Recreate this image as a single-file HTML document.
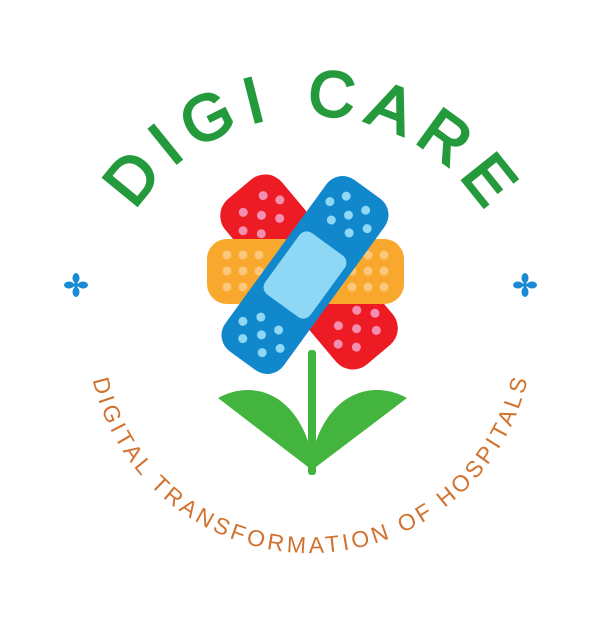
<!DOCTYPE html>
<html><head><meta charset="utf-8"><style>
html,body{margin:0;padding:0;background:#fff;}
svg{display:block;}
</style></head><body>
<svg width="616" height="621" viewBox="0 0 616 621" xmlns="http://www.w3.org/2000/svg">
<defs>
<path id="top" d="M 102,323 A 208 208 0 0 1 518,323"/>
<path id="bot" d="M 310,107 A 223 223 0 0 0 310,553 A 223 223 0 0 0 310,107"/>
</defs>
<text font-family="Liberation Sans, sans-serif" font-size="64" fill="#259a3c" stroke="#259a3c" stroke-width="2.5">
<textPath href="#top" startOffset="50%" text-anchor="middle" textLength="415" lengthAdjust="spacing">DIGI CARE</textPath></text>
<text font-family="Liberation Sans, sans-serif" font-size="23" fill="#d2722f">
<textPath href="#bot" startOffset="50%" text-anchor="middle" textLength="600" lengthAdjust="spacing">DIGITAL TRANSFORMATION OF HOSPITALS</textPath></text>

<g fill="#1a8ad4">
<g transform="translate(76,285)">
<ellipse cx="0" cy="-7" rx="3.5" ry="5"/><ellipse cx="0" cy="7" rx="3.5" ry="5"/>
<ellipse cx="-7" cy="0" rx="5" ry="3.5"/><ellipse cx="7" cy="0" rx="5" ry="3.5"/>
<rect x="-1.5" y="-8" width="3" height="16"/><rect x="-8" y="-1.5" width="16" height="3"/></g>
<g transform="translate(525,285)">
<ellipse cx="0" cy="-7" rx="3.5" ry="5"/><ellipse cx="0" cy="7" rx="3.5" ry="5"/>
<ellipse cx="-7" cy="0" rx="5" ry="3.5"/><ellipse cx="7" cy="0" rx="5" ry="3.5"/>
<rect x="-1.5" y="-8" width="3" height="16"/><rect x="-8" y="-1.5" width="16" height="3"/></g>
</g>

<g fill="#43b53f">
<rect x="308" y="350" width="8" height="125" rx="3"/>
<path d="M218,398 C255,378 298,395 312,455 L312,470 Z"/>
<path d="M407,398 C370,378 326,395 312,455 L312,470 Z"/>
</g>

<g transform="translate(309,272) rotate(50)">
<rect x="-108" y="-37" width="216" height="74" rx="22" fill="#ed1c24"/>
<g fill="#f48fb1">
<circle cx="-88" cy="-14" r="4.5"/><circle cx="-88" cy="12" r="4.5"/>
<circle cx="-74" cy="-24" r="4.5"/><circle cx="-74" cy="0" r="4.5"/><circle cx="-74" cy="24" r="4.5"/>
<circle cx="-60" cy="-12" r="4.5"/><circle cx="-60" cy="12" r="4.5"/>
<circle cx="88" cy="-14" r="4.5"/><circle cx="88" cy="12" r="4.5"/>
<circle cx="74" cy="-24" r="4.5"/><circle cx="74" cy="0" r="4.5"/><circle cx="74" cy="24" r="4.5"/>
<circle cx="60" cy="-12" r="4.5"/><circle cx="60" cy="12" r="4.5"/>
</g></g>

<rect x="207" y="239" width="197" height="65" rx="20" fill="#f7a82d"/>
<g fill="#fcc778">
<circle cx="227" cy="255" r="4.5"/><circle cx="243" cy="255" r="4.5"/><circle cx="259" cy="255" r="4.5"/>
<circle cx="227" cy="271" r="4.5"/><circle cx="243" cy="271" r="4.5"/><circle cx="259" cy="271" r="4.5"/>
<circle cx="227" cy="287" r="4.5"/><circle cx="243" cy="287" r="4.5"/><circle cx="259" cy="287" r="4.5"/>
<circle cx="352" cy="255" r="4.5"/><circle cx="368" cy="255" r="4.5"/><circle cx="384" cy="255" r="4.5"/>
<circle cx="352" cy="271" r="4.5"/><circle cx="368" cy="271" r="4.5"/><circle cx="384" cy="271" r="4.5"/>
<circle cx="352" cy="287" r="4.5"/><circle cx="368" cy="287" r="4.5"/><circle cx="384" cy="287" r="4.5"/>
</g>

<g transform="translate(305,275) rotate(-54)">
<rect x="-106" y="-36" width="212" height="72" rx="20" fill="#1188cc"/>
<rect x="-38" y="-28" width="76" height="56" rx="9" fill="#8ed8f5"/>
<g fill="#8ed8f5">
<circle cx="-88" cy="-13" r="4.5"/><circle cx="-88" cy="11" r="4.5"/>
<circle cx="-74" cy="-23" r="4.5"/><circle cx="-74" cy="0" r="4.5"/><circle cx="-74" cy="23" r="4.5"/>
<circle cx="-60" cy="-11" r="4.5"/><circle cx="-60" cy="11" r="4.5"/>
<circle cx="88" cy="-13" r="4.5"/><circle cx="88" cy="11" r="4.5"/>
<circle cx="74" cy="-23" r="4.5"/><circle cx="74" cy="0" r="4.5"/><circle cx="74" cy="23" r="4.5"/>
<circle cx="60" cy="-11" r="4.5"/><circle cx="60" cy="11" r="4.5"/>
</g></g>
</svg>
</body></html>
